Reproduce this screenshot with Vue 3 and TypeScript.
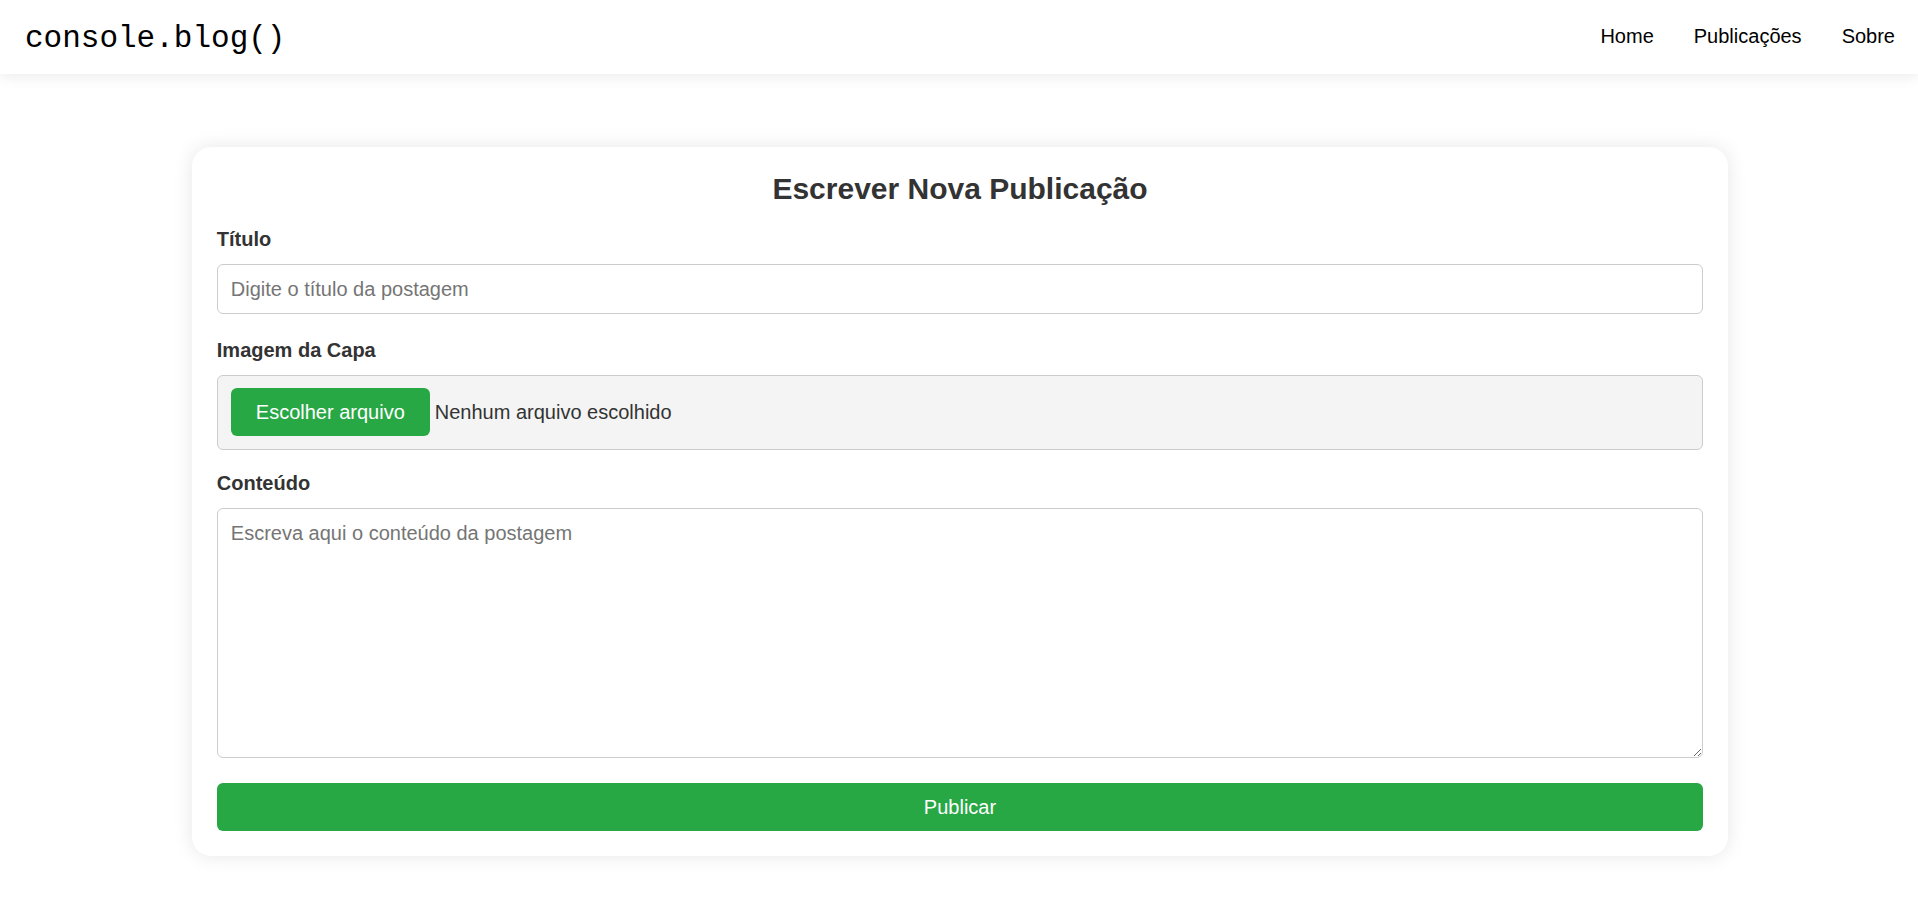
<script setup lang="ts">
import { computed, ref } from 'vue'

interface NavItem {
  label: string
  href: string
}

const navItems: NavItem[] = [
  { label: 'Home', href: '#home' },
  { label: 'Publicações', href: '#publicacoes' },
  { label: 'Sobre', href: '#sobre' },
]

const title = ref('')
const content = ref('')
const cover = ref<File | null>(null)
const fileInput = ref<HTMLInputElement | null>(null)

const coverName = computed(() => cover.value?.name ?? 'Nenhum arquivo escolhido')

function chooseFile(): void {
  fileInput.value?.click()
}

function onFileChange(event: Event): void {
  cover.value = (event.target as HTMLInputElement).files?.[0] ?? null
}
</script>

<template>
  <header class="topbar">
    <a class="logo" href="#home">console.blog()</a>
    <nav class="nav">
      <a v-for="item in navItems" :key="item.href" :href="item.href">{{ item.label }}</a>
    </nav>
  </header>

  <main class="card">
    <h1>Escrever Nova Publicação</h1>
    <form @submit.prevent>
      <div class="field">
        <label for="title">Título</label>
        <input id="title" v-model="title" class="control" type="text" placeholder="Digite o título da postagem" />
      </div>
      <div class="field cover-field">
        <label for="cover">Imagem da Capa</label>
        <div class="control file">
          <input id="cover" ref="fileInput" class="file-native" type="file" accept="image/*" tabindex="-1" @change="onFileChange" />
          <button class="btn" type="button" @click="chooseFile">Escolher arquivo</button>
          <span>{{ coverName }}</span>
        </div>
      </div>
      <div class="field">
        <label for="content">Conteúdo</label>
        <textarea id="content" v-model="content" class="control" placeholder="Escreva aqui o conteúdo da postagem"></textarea>
      </div>
      <button class="btn submit" type="submit">Publicar</button>
    </form>
  </main>
</template>

<style>
body {
  margin: 0;
  background: #fff;
  font-family: "Liberation Sans", Arial, sans-serif;
  font-size: 20px;
  line-height: 23px;
  color: #333;
}
</style>

<style scoped>
.topbar {
  display: flex;
  align-items: center;
  justify-content: space-between;
  height: 74px;
  padding: 0 23px 2px 25px;
  box-sizing: border-box;
  background: #fff;
  box-shadow: 0 3px 13px rgba(0, 0, 0, 0.08);
}

.topbar a {
  color: #000;
  text-decoration: none;
}

.topbar .logo {
  padding-top: 5px;
  font-family: "Liberation Mono", monospace;
  font-size: 31px;
  line-height: 34px;
}

.nav {
  display: flex;
  gap: 40px;
}

.card {
  margin: 73px calc(10% - 2px) 47px 10%;
  padding: 25px;
  border-radius: 19px;
  background: #fff;
  box-shadow: 0 0 19px rgba(0, 0, 0, 0.1);
}

h1 {
  margin: 0 0 22px;
  font-size: 30px;
  line-height: 34px;
  text-align: center;
}

.field {
  display: flex;
  flex-direction: column;
  gap: 13px;
  margin-bottom: 25px;
}

.cover-field {
  margin-bottom: 22px;
}

label {
  font-weight: bold;
}

.control {
  width: 100%;
  padding: 13px;
  box-sizing: border-box;
  border: 1px solid #ccc;
  border-radius: 6px;
  background: #fff;
  color: #333;
  font: inherit;
}

input.control {
  height: 50px;
}

.control::placeholder {
  color: #757575;
}

.file {
  position: relative;
  display: flex;
  align-items: center;
  gap: 5px;
  padding-top: 12px;
  background: #f4f4f4;
}

.file-native {
  position: absolute;
  width: 1px;
  height: 1px;
  opacity: 0;
  pointer-events: none;
}

textarea {
  display: block;
  height: 250px;
  resize: vertical;
}

.btn {
  height: 48px;
  padding: 0 25px;
  border: 0;
  border-radius: 6px;
  background: #28a745;
  color: #fff;
  font: inherit;
  cursor: pointer;
}

.submit {
  display: block;
  width: 100%;
}
</style>
